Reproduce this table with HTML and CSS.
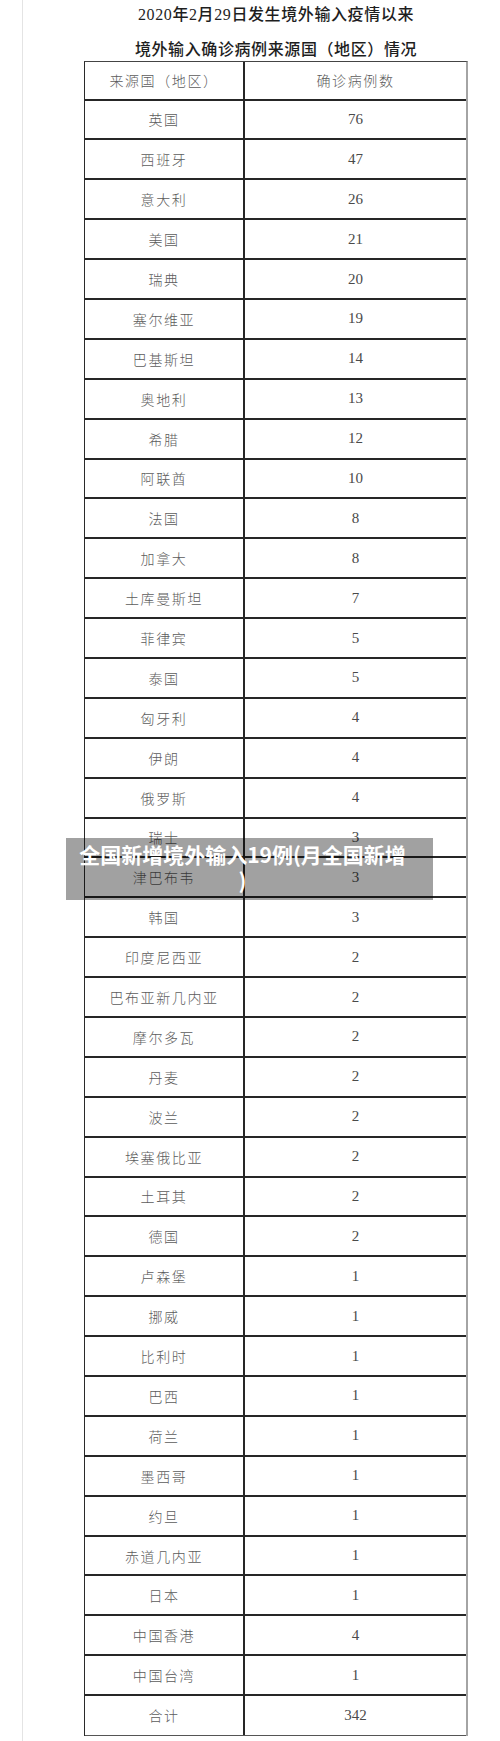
FILE: index.html
```html
<!DOCTYPE html>
<html lang="zh-CN">
<head>
<meta charset="utf-8">
<title>境外输入确诊病例来源国（地区）情况</title>
<link rel="stylesheet" href="styles.css">
</head>
<body>
<div class="page">
  <div class="doc">
    <h1 class="title">
      <span class="line">2020年2月29日发生境外输入疫情以来</span>
      <span class="line">境外输入确诊病例来源国（地区）情况</span>
    </h1>
    <div class="stats" role="table">
      <div class="row head" role="row"><div class="cell name" role="columnheader">来源国（地区）</div><div class="cell name" role="columnheader">确诊病例数</div></div>
      <div class="row" role="row"><div class="cell name">英国</div><div class="cell num">76</div></div>
      <div class="row" role="row"><div class="cell name">西班牙</div><div class="cell num">47</div></div>
      <div class="row" role="row"><div class="cell name">意大利</div><div class="cell num">26</div></div>
      <div class="row" role="row"><div class="cell name">美国</div><div class="cell num">21</div></div>
      <div class="row" role="row"><div class="cell name">瑞典</div><div class="cell num">20</div></div>
      <div class="row" role="row"><div class="cell name">塞尔维亚</div><div class="cell num">19</div></div>
      <div class="row" role="row"><div class="cell name">巴基斯坦</div><div class="cell num">14</div></div>
      <div class="row" role="row"><div class="cell name">奥地利</div><div class="cell num">13</div></div>
      <div class="row" role="row"><div class="cell name">希腊</div><div class="cell num">12</div></div>
      <div class="row" role="row"><div class="cell name">阿联酋</div><div class="cell num">10</div></div>
      <div class="row" role="row"><div class="cell name">法国</div><div class="cell num">8</div></div>
      <div class="row" role="row"><div class="cell name">加拿大</div><div class="cell num">8</div></div>
      <div class="row" role="row"><div class="cell name">土库曼斯坦</div><div class="cell num">7</div></div>
      <div class="row" role="row"><div class="cell name">菲律宾</div><div class="cell num">5</div></div>
      <div class="row" role="row"><div class="cell name">泰国</div><div class="cell num">5</div></div>
      <div class="row" role="row"><div class="cell name">匈牙利</div><div class="cell num">4</div></div>
      <div class="row" role="row"><div class="cell name">伊朗</div><div class="cell num">4</div></div>
      <div class="row" role="row"><div class="cell name">俄罗斯</div><div class="cell num">4</div></div>
      <div class="row" role="row"><div class="cell name">瑞士</div><div class="cell num">3</div></div>
      <div class="row" role="row"><div class="cell name">津巴布韦</div><div class="cell num">3</div></div>
      <div class="row" role="row"><div class="cell name">韩国</div><div class="cell num">3</div></div>
      <div class="row" role="row"><div class="cell name">印度尼西亚</div><div class="cell num">2</div></div>
      <div class="row" role="row"><div class="cell name">巴布亚新几内亚</div><div class="cell num">2</div></div>
      <div class="row" role="row"><div class="cell name">摩尔多瓦</div><div class="cell num">2</div></div>
      <div class="row" role="row"><div class="cell name">丹麦</div><div class="cell num">2</div></div>
      <div class="row" role="row"><div class="cell name">波兰</div><div class="cell num">2</div></div>
      <div class="row" role="row"><div class="cell name">埃塞俄比亚</div><div class="cell num">2</div></div>
      <div class="row" role="row"><div class="cell name">土耳其</div><div class="cell num">2</div></div>
      <div class="row" role="row"><div class="cell name">德国</div><div class="cell num">2</div></div>
      <div class="row" role="row"><div class="cell name">卢森堡</div><div class="cell num">1</div></div>
      <div class="row" role="row"><div class="cell name">挪威</div><div class="cell num">1</div></div>
      <div class="row" role="row"><div class="cell name">比利时</div><div class="cell num">1</div></div>
      <div class="row" role="row"><div class="cell name">巴西</div><div class="cell num">1</div></div>
      <div class="row" role="row"><div class="cell name">荷兰</div><div class="cell num">1</div></div>
      <div class="row" role="row"><div class="cell name">墨西哥</div><div class="cell num">1</div></div>
      <div class="row" role="row"><div class="cell name">约旦</div><div class="cell num">1</div></div>
      <div class="row" role="row"><div class="cell name">赤道几内亚</div><div class="cell num">1</div></div>
      <div class="row" role="row"><div class="cell name">日本</div><div class="cell num">1</div></div>
      <div class="row" role="row"><div class="cell name">中国香港</div><div class="cell num">4</div></div>
      <div class="row" role="row"><div class="cell name">中国台湾</div><div class="cell num">1</div></div>
      <div class="row last" role="row"><div class="cell name">合计</div><div class="cell num">342</div></div>
    </div>
  </div>
  <div class="caption">全国新增境外输入19例(月全国新增<br>)</div>
</div>
</body>
</html>
```

FILE: styles.css
```css
html, body {
  margin: 0;
  padding: 0;
  background: #ffffff;
}

.page {
  position: relative;
  width: 500px;
  height: 1741px;
  overflow: hidden;
}

.doc {
  margin-left: 22px;
  height: 1741px;
  border-left: 1px solid #e4e4e4;
  padding-left: 61px;
}

.title {
  margin: 0;
  width: 384px;
  height: 61px;
  text-align: center;
  font-family: "Liberation Serif", "Noto Sans CJK SC", serif;
  font-weight: 500;
  font-size: 16px;
  color: #1e1e1e;
  letter-spacing: 0.6px;
}

.title .line {
  display: block;
  height: 36px;
  line-height: 29px;
}

.title .line + .line {
  height: 25px;
  line-height: 28px;
}

.stats {
  width: 384px;
  border-top: 1px solid #444;
  border-left: 1px solid #2a2a2a;
  border-right: 2px solid #a4a4a4;
  box-sizing: border-box;
}

.row {
  display: grid;
  grid-template-columns: 160px 1fr;
  height: 39.9px;
  box-sizing: border-box;
  border-bottom: 2px solid #262626;
}

.row.head {
  height: 38.5px;
}

.row.last {
  height: 39.4px;
  border-bottom: 1px solid #555;
}

.cell {
  display: flex;
  align-items: center;
  justify-content: center;
}

.cell:first-child {
  border-right: 2px solid #262626;
}

.name {
  font-family: "Noto Sans CJK SC", sans-serif;
  font-weight: 300;
  font-size: 14px;
  letter-spacing: 1.6px;
  color: #5c5c5c;
}

.num {
  font-family: "Liberation Serif", serif;
  font-size: 15px;
  color: #4a4a4a;
}

.caption {
  position: absolute;
  left: 66px;
  top: 838px;
  width: 367px;
  height: 62px;
  box-sizing: border-box;
  padding: 3px 18px 0 4px;
  background: rgba(0, 0, 0, 0.37);
  color: #ffffff;
  font-family: "Noto Sans CJK SC", sans-serif;
  font-weight: 700;
  font-size: 21px;
  line-height: 26px;
  text-align: center;
}
```
